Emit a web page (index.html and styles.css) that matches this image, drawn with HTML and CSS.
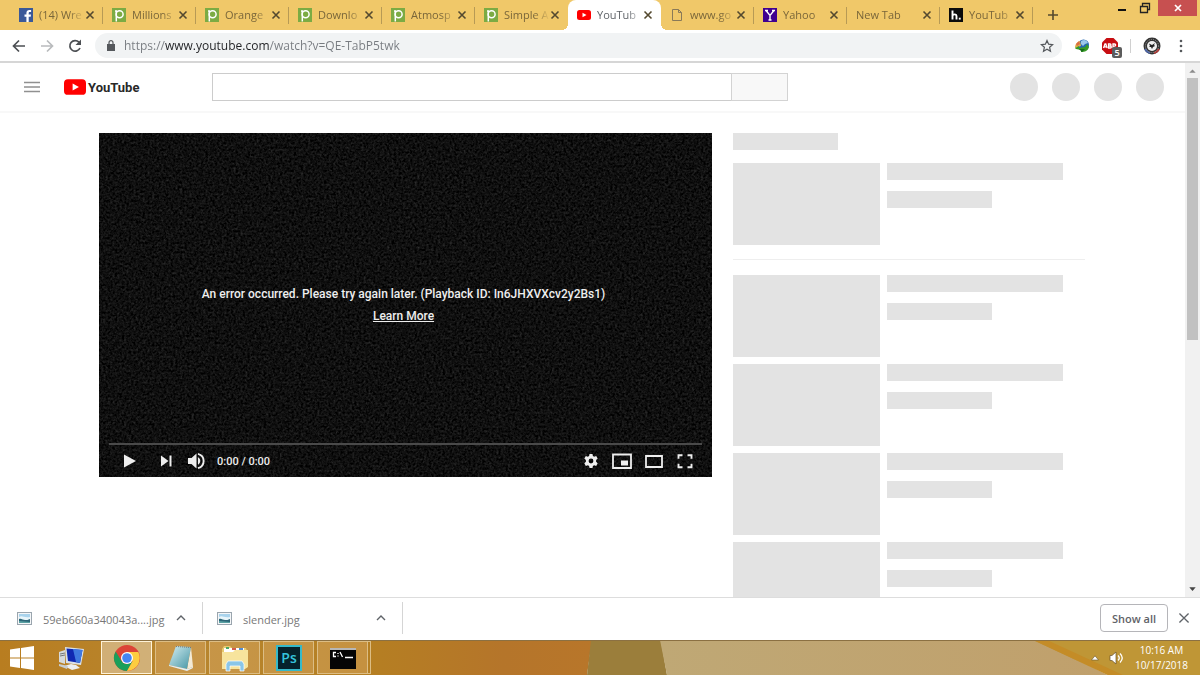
FILE: index.html
```html
<!DOCTYPE html>
<html lang="en">

<head>
    <meta charset="UTF-8">
    <meta name="viewport" content="width=device-width, initial-scale=1.0">
    <title>YouTube</title>
    <link rel="stylesheet" href="styles.css">
</head>

<body>
    <!-- shared icons -->
    <svg class="defs" width="0" height="0" aria-hidden="true">
        <symbol id="i-close" viewBox="0 0 10 10">
            <path d="M1.5 1.5l7 7M8.5 1.5l-7 7" fill="none" stroke="currentColor" stroke-width="1.6" />
        </symbol>
        <symbol id="i-close-thin" viewBox="0 0 10 10">
            <path d="M1.2 1.2l7.600 7.600M8.800 1.2l-7.600 7.600" fill="none" stroke="currentColor" stroke-width="1.1" />
        </symbol>
        <symbol id="i-p" viewBox="0 0 14 14">
            <path d="M0 0h14v14H0z" fill="#7cab43" />
            <path d="M3 3h1.300v10.500" fill="none" stroke="#fff" stroke-width="1.5" />
            <circle cx="7.6" cy="6.2" r="3.5" fill="none" stroke="#fff" stroke-width="1.5" />
        </symbol>
        <symbol id="i-yt" viewBox="0 0 28 20">
            <rect width="28" height="20" rx="5" fill="#f00" />
            <path d="M11 5.5v9l8-4.5z" fill="#fff" />
        </symbol>
        <symbol id="i-up" viewBox="0 0 10 6">
            <path d="M1 5l4-4 4 4" fill="none" stroke="currentColor" stroke-width="1.4" />
        </symbol>
        <symbol id="i-image" viewBox="0 0 15 13">
            <rect x=".5" y=".5" width="14" height="12" fill="#f4f6f8" stroke="#9aa5ae" />
            <path d="M2 2h11v9H2z" fill="#a9d3ec" />
            <path d="M2 5c3-2 5 1 11 0v3H2z" fill="#e9f5fa" />
            <path d="M2 7c2-1 4 1 6 1s3 0 5-1v4H2z" fill="#2c6577" />
            <path d="M2 9l11 1v1H2z" fill="#5aa1a3" />
        </symbol>
    </svg>

    <header class="tab-strip">
        <div class="tabs">
            <div class="tab">
                <svg class="favicon" viewBox="0 0 14 14"><path d="M0 0h14v14H0z" fill="#3b5998" /><path d="M7.4 14V8.8H5.5V6.6h1.9V5c0-2 1.2-3 3-3h1.7v2h-1.2c-.9 0-1.2.4-1.2 1.2v1.4h2.3l-.3 2.2h-2V14z" fill="#fff" /></svg>
                <button class="tab-title">(14) Wre</button>
                <button class="tab-close" aria-label="Close tab"><svg><use href="#i-close" /></svg></button>
            </div>
            <div class="tab">
                <svg class="favicon"><use href="#i-p" /></svg>
                <button class="tab-title">Millions</button>
                <button class="tab-close" aria-label="Close tab"><svg><use href="#i-close" /></svg></button>
            </div>
            <div class="tab">
                <svg class="favicon"><use href="#i-p" /></svg>
                <button class="tab-title">Orange</button>
                <button class="tab-close" aria-label="Close tab"><svg><use href="#i-close" /></svg></button>
            </div>
            <div class="tab">
                <svg class="favicon"><use href="#i-p" /></svg>
                <button class="tab-title">Downlo</button>
                <button class="tab-close" aria-label="Close tab"><svg><use href="#i-close" /></svg></button>
            </div>
            <div class="tab">
                <svg class="favicon"><use href="#i-p" /></svg>
                <button class="tab-title">Atmosp</button>
                <button class="tab-close" aria-label="Close tab"><svg><use href="#i-close" /></svg></button>
            </div>
            <div class="tab before-active">
                <svg class="favicon"><use href="#i-p" /></svg>
                <button class="tab-title">Simple A</button>
                <button class="tab-close" aria-label="Close tab"><svg><use href="#i-close" /></svg></button>
            </div>
            <div class="tab active">
                <svg class="favicon"><use href="#i-yt" /></svg>
                <button class="tab-title">YouTub</button>
                <button class="tab-close" aria-label="Close tab"><svg><use href="#i-close" /></svg></button>
            </div>
            <div class="tab">
                <svg class="favicon" viewBox="0 0 14 14"><path d="M2.5 1.5h6l3 3v8h-9zM8.5 1.5v3h3" fill="none" stroke="#8a7a58" /></svg>
                <button class="tab-title">www.go</button>
                <button class="tab-close" aria-label="Close tab"><svg><use href="#i-close" /></svg></button>
            </div>
            <div class="tab">
                <svg class="favicon" viewBox="0 0 14 14"><path d="M0 0h14v14H0z" fill="#400090" /><path d="M3 2.5l4 5 4-5M7 7v5M2 2.5h3M9 2.5h3M5.5 12h3" fill="none" stroke="#fff" stroke-width="1.4" /></svg>
                <button class="tab-title">Yahoo</button>
                <button class="tab-close" aria-label="Close tab"><svg><use href="#i-close" /></svg></button>
            </div>
            <div class="tab">
                <button class="tab-title">New Tab</button>
                <button class="tab-close" aria-label="Close tab"><svg><use href="#i-close" /></svg></button>
            </div>
            <div class="tab">
                <svg class="favicon" viewBox="0 0 14 14"><path d="M0 0h14v14H0z" fill="#0b0b0b" /><path d="M3.5 2.5v9M3.5 7.5c1-1.6 4-1.6 4 .5v3.5" fill="none" stroke="#fff" stroke-width="1.9" /><path d="M9.8 9.7h1.9v1.9H9.8z" fill="#fff" /></svg>
                <button class="tab-title">YouTub</button>
                <button class="tab-close" aria-label="Close tab"><svg><use href="#i-close" /></svg></button>
            </div>
            <button class="new-tab" aria-label="New tab"><svg viewBox="0 0 12 12"><path d="M6 1v10M1 6h10" stroke="#54492f" stroke-width="1.6" /></svg></button>
        </div>
        <div class="window-buttons">
            <button aria-label="Minimize"><svg viewBox="0 0 12 12"><path d="M2 8h8" stroke="#111" stroke-width="2" /></svg></button>
            <button aria-label="Restore"><svg viewBox="0 0 12 12"><path d="M3.5 4V1.5h7v6H8.500M1.500 4.500h7v6h-7z" fill="none" stroke="#222" stroke-width="1.300" /></svg></button>
            <button class="window-close" aria-label="Close"><svg viewBox="0 0 12 12"><path d="M3 3l6 6M9 3l-6 6" stroke="#fff" stroke-width="1.7" /></svg></button>
        </div>
    </header>

    <div class="toolbar">
        <button aria-label="Back"><svg viewBox="0 0 16 16"><path d="M14 8H3M8 2.500L2.500 8 8 13.500" fill="none" stroke="#4c4f53" stroke-width="1.700" /></svg></button>
        <button aria-label="Forward"><svg viewBox="0 0 16 16"><path d="M2 8h11M8 2.500L13.500 8 8 13.500" fill="none" stroke="#b9bbbd" stroke-width="1.700" /></svg></button>
        <button aria-label="Reload"><svg viewBox="0 0 16 16"><path d="M13 10a5.300 5.300 0 1 1-1-5.800" fill="none" stroke="#4c4f53" stroke-width="1.700" /><path d="M14 1.500V7H8.500z" fill="#4c4f53" /></svg></button>
        <div class="omnibox">
            <svg class="lock" viewBox="0 0 8 11"><path d="M0 4h8v7H0z" fill="#55585c" /><path d="M2 4.500V2.700a2 2 0 0 1 4 0v1.800" fill="none" stroke="#55585c" stroke-width="1.200" /></svg>
            <input class="url" type="text" aria-label="Address" value="https://www.youtube.com/watch?v=QE-TabP5twk">
            <button class="star" aria-label="Bookmark"><svg viewBox="0 0 14 14"><path d="M7 1.500l1.600 3.700 4 .4-3 2.700.9 4L7 10.200l-3.500 2.100.9-4-3-2.700 4-.4z" fill="none" stroke="#55585c" stroke-width="1.200" /></svg></button>
        </div>
        <div class="extensions">
            <button aria-label="Download manager">
                <svg viewBox="0 0 16 16">
                    <circle cx="9.500" cy="7" r="5.500" fill="#2467b0" />
                    <path d="M7 3c3-2 6-1 7 2l-3 1-2 2-2-2z" fill="#9cc8ea" />
                    <path d="M1 10c0-4 2-6 5-7l1 5z" fill="#e0b04a" />
                    <path d="M2 6l3-3 1 3-3 2z" fill="#dc6b45" />
                    <path d="M1 10l4-2v2l6-1 2-3 2 3c-1 4-4 5-8 5v-2l-5-1z" fill="#379a25" />
                    <path d="M5 11l6 0-3 3z" fill="#176b1b" />
                </svg>
            </button>
            <button class="adblock" aria-label="Adblock Plus">
                <svg viewBox="0 0 16 16"><path d="M4.500 0h7L16 4.500v7L11.500 16h-7L0 11.500v-7z" fill="#c70d12" /><path d="M1.500 10L3 6h.8l1.300 4M2.200 8.800h2M6.500 6v4h1.800c1.400 0 1.400-2 0-2H6.700 8.100c1.200 0 1.200-2 0-2zM11 10V6h1.500c1.600 0 1.600 2.200 0 2.200H11" fill="none" stroke="#fff" stroke-width="1.300" /></svg>
                <span class="badge">5</span>
            </button>
            <span class="divider"></span>
            <button class="profile" aria-label="Profile"><svg viewBox="0 0 18 18"><circle cx="9" cy="9" r="8.500" fill="#333" /><path d="M2 12a8 8 0 0 0 5 4" stroke="#4862a8" stroke-width="2" fill="none" /><path d="M11 16a8 8 0 0 0 5-4" stroke="#b33a36" stroke-width="2" fill="none" /><circle cx="9" cy="9" r="6.600" fill="none" stroke="#999" stroke-dasharray="1 1" /><circle cx="9" cy="9" r="5" fill="#f0f0f0" /><path d="M6 6.500l3 1.500 3-2-1 2 1 1-2 1-1 2-1-2-2 0 1-1z" fill="#222" /></svg></button>
            <button class="menu" aria-label="Menu"><svg viewBox="0 0 4 14"><circle cx="2" cy="2" r="1.300" /><circle cx="2" cy="7" r="1.300" /><circle cx="2" cy="12" r="1.300" /></svg></button>
        </div>
    </div>

    <div class="viewport">
        <div class="page">
            <div class="masthead">
                <button class="guide" aria-label="Guide"><svg viewBox="0 0 16 12"><path d="M0 1.500h16M0 6h16M0 10.500h16" stroke="#909090" stroke-width="1.300" /></svg></button>
                <a class="logo" href="#"><svg><use href="#i-yt" /></svg><span>YouTube</span></a>
                <form class="search">
                    <input type="text" aria-label="Search">
                    <button type="button" aria-label="Search"></button>
                </form>
                <div class="avatars">
                    <span></span><span></span><span></span><span></span>
                </div>
            </div>

            <div class="watch">
                <main class="player">
                    <svg class="static" width="100%" height="100%" aria-hidden="true">
                        <filter id="noise" x="0" y="0" width="100%" height="100%" color-interpolation-filters="sRGB">
                            <feTurbulence type="fractalNoise" baseFrequency="0.43" numOctaves="3" seed="4" />
                            <feColorMatrix values="0.2 0.16 0 0 -0.12  0.2 0.16 0 0 -0.12  0.2 0.16 0 0 -0.12  0 0 0 0 1" />
                        </filter>
                        <rect width="100%" height="100%" filter="url(#noise)" />
                    </svg>
                    <div class="error">
                        <p>An error occurred. Please try again later. (Playback ID: In6JHXVXcv2y2Bs1)</p>
                        <a href="#">Learn More</a>
                    </div>
                    <div class="controls">
                        <input class="progress" type="range" value="0" aria-label="Seek">
                        <div class="control-row">
                            <button class="play" aria-label="Play"><svg viewBox="0 0 18 18"><path d="M3 2.500v13L15 9z" /></svg></button>
                            <button aria-label="Next"><svg viewBox="0 0 18 18"><path d="M4 3.500v11L11.500 9zM12.500 3.500h2v11h-2z" /></svg></button>
                            <button aria-label="Mute"><svg viewBox="0 0 18 18"><path d="M1 6v6h3.500l5 4.500v-15L4.500 6zM11 5.300v7.400c3-1.400 3-6 0-7.400z" /><path d="M11 1.800c7.500 2 7.500 12.400 0 14.400" fill="none" stroke="#eee" stroke-width="1.900" /></svg></button>
                            <span class="time">0:00 / 0:00</span>
                            <button class="first-right" aria-label="Settings"><svg viewBox="0 0 18 18"><path fill-rule="evenodd" d="M7.500 2h3l.4 2 1.300.8 2-.7 1.500 2.500-1.600 1.500v1.700l1.600 1.500-1.500 2.600-2-.7-1.300.8-.4 2h-3l-.4-2-1.300-.8-2 .7-1.500-2.600 1.600-1.500V8.100L2.300 6.600l1.500-2.500 2 .7L7.100 4zM9 6.600a2.400 2.400 0 1 0 0 4.800 2.400 2.400 0 0 0 0-4.800z" /></svg></button>
                            <button aria-label="Miniplayer"><svg class="wide" viewBox="0 0 20 18"><path d="M1 2.500h18v13.500H1z" fill="none" stroke="#eee" stroke-width="1.800" /><path d="M9 8.500h7v5H9z" /></svg></button>
                            <button aria-label="Theater mode"><svg class="wide" viewBox="0 0 20 18"><path d="M2 4h16v11H2z" fill="none" stroke="#eee" stroke-width="1.800" /></svg></button>
                            <button aria-label="Full screen"><svg viewBox="0 0 18 18"><path d="M6.500 3.200h-4v3.500M11.500 3.200h4v3.500M6.500 15.200h-4v-3.500M11.500 15.200h4v-3.500" fill="none" stroke="#eee" stroke-width="1.900" /></svg></button>
                        </div>
                    </div>
                </main>

                <aside class="related">
                    <div class="bar short"></div>
                    <div class="video next-up"><div class="thumb"></div><div class="meta"><div class="bar"></div><div class="bar short"></div></div></div>
                    <div class="video"><div class="thumb"></div><div class="meta"><div class="bar"></div><div class="bar short"></div></div></div>
                    <div class="video"><div class="thumb"></div><div class="meta"><div class="bar"></div><div class="bar short"></div></div></div>
                    <div class="video"><div class="thumb"></div><div class="meta"><div class="bar"></div><div class="bar short"></div></div></div>
                    <div class="video"><div class="thumb"></div><div class="meta"><div class="bar"></div><div class="bar short"></div></div></div>
                </aside>
            </div>
        </div>
        <div class="scrollbar">
            <svg viewBox="0 0 14 14"><path d="M4 9l3-3 3 3z" fill="#8b8b8b" /></svg>
            <div class="thumb-bar"></div>
            <svg viewBox="0 0 14 14"><path d="M4 5l3 3.500L10 5z" fill="#444" /></svg>
        </div>
    </div>

    <div class="downloads">
        <div class="download">
            <svg class="file-icon"><use href="#i-image" /></svg>
            <a href="#">59eb660a340043a....jpg</a>
            <button aria-label="File options"><svg><use href="#i-up" /></svg></button>
        </div>
        <div class="download">
            <svg class="file-icon"><use href="#i-image" /></svg>
            <a href="#">slender.jpg</a>
            <button aria-label="File options"><svg><use href="#i-up" /></svg></button>
        </div>
        <button class="show-all">Show all</button>
        <button class="shelf-close" aria-label="Close downloads"><svg><use href="#i-close-thin" /></svg></button>
    </div>

    <footer class="taskbar">
        <svg class="wallpaper" viewBox="0 0 1200 35" preserveAspectRatio="none" aria-hidden="true">
            <defs>
                <linearGradient id="w1"><stop offset="0" stop-color="#b87d20" /><stop offset=".3" stop-color="#b8862f" /><stop offset=".62" stop-color="#b57f22" /><stop offset=".85" stop-color="#b5752a" /><stop offset="1" stop-color="#b8762a" /></linearGradient>
                <linearGradient id="w2"><stop offset="0" stop-color="#bfa875" /><stop offset="1" stop-color="#c0a06c" /></linearGradient>
            </defs>
            <path d="M0 0h592l-5 35H0z" fill="url(#w1)" />
            <path d="M591 0h70l6 35h-80z" fill="#9b7e3b" />
            <path d="M660 0h376l72 35H667z" fill="url(#w2)" />
            <path d="M1033 0h167v35h-92z" fill="#bf9636" />
            <path d="M1033 0h14l76 35h-15z" fill="#c48c27" />
            <path d="M0 .5h1200" stroke="#8b7042" />
        </svg>
        <button class="start" aria-label="Start"><svg viewBox="0 0 24 24"><path d="M0 3.500l10-1.500v9.500H0zM11 1.900L24 0v11.500H11zM0 12.500h10V22L0 20.500zM11 12.500h13V24l-13-1.900z" fill="#fff" /></svg></button>
        <button class="pinned" aria-label="Computer"><svg viewBox="0 0 28 28"><path d="M2 8l6-2v14l-6-2z" fill="#d7dadb" /><path d="M3 10l5-1M3 12l5-1" stroke="#777" /><path d="M8 3l19 2-3 16-15-2z" fill="#d9e1e8" /><path d="M9.500 4.500l16 1.500-2.500 13-12-2z" fill="#1029b2" /><path d="M16 5l9.500 1-2.500 13-4-1z" fill="#3f79df" /><path d="M14 20l5 1 4 3-8 2-8-4z" fill="#eceff1" /><path d="M2 20l9 2-1 3-8-3z" fill="#c9ced2" /></svg></button>
        <div class="tasks">
            <button class="task current" aria-label="Chrome"><svg viewBox="0 0 28 28"><circle cx="14" cy="14" r="13" fill="#dc4437" /><path d="M2.700 7.500A13 13 0 0 0 14 27l5.500-9.800L14 20a6 6 0 0 1-5.500-3z" fill="#1a9f5a" /><path d="M14 27A13 13 0 0 0 25.300 8H14l5.500 9.200z" fill="#fdcd40" /><circle cx="14" cy="14" r="6" fill="#fff" /><circle cx="14" cy="14" r="4.800" fill="#4585f3" /></svg></button>
            <button class="task" aria-label="Notepad"><svg viewBox="0 0 28 28"><defs><linearGradient id="note" x2="1" y2="1"><stop offset="0" stop-color="#d6eef1" /><stop offset="1" stop-color="#4495a5" /></linearGradient></defs><path d="M24 3l2 20-6 2z" fill="#f3ead6" /><path d="M9 2l15 1-4 22L2 21z" fill="url(#note)" /><path d="M2 21l18 4 6-2v1l-6 3L2 22z" fill="#e5edef" /><path d="M9 2.500l15 1" stroke="#777" stroke-dasharray="1 1" /></svg></button>
            <button class="task" aria-label="File Explorer"><svg viewBox="0 0 28 28"><path d="M1 5l2-3h6l2 2h14l1 3v17H1z" fill="#e7ca70" /><path d="M3 4h20v4H3z" fill="#fff" /><path d="M5 3h3v2H5z" fill="#4da764" /><path d="M11 4h4v2h-4z" fill="#d25c4e" /><path d="M18 4h4v2h-4z" fill="#568ed2" /><path d="M1 8h11l2-2h13v17l-3 2H1z" fill="#f7e49d" /><path d="M5 27v-7l2-3h14l2 3v7h-4v-5H9v5z" fill="#8ac6e8" stroke="#fff" stroke-width=".7" /></svg></button>
            <button class="task" aria-label="Photoshop"><svg viewBox="0 0 28 28"><path d="M2 2h24v24H2z" fill="#05222c" stroke="#35b9c9" stroke-width="2" /><text class="ps" x="14" y="19" text-anchor="middle">Ps</text></svg></button>
            <button class="task" aria-label="Command Prompt"><svg viewBox="0 0 28 28"><path d="M1 4h26v21H1z" fill="#050505" /><path d="M1 4h26v2H1z" fill="#b6b6b6" /><path d="M7 8.500H4.500v4H7M9 9v1M9 11.500v1M11 8l2.500 5M16 13.500h8" fill="none" stroke="#fff" stroke-width="1.300" /></svg></button>
            <span class="stack"></span>
        </div>
        <div class="tray">
            <button aria-label="Hidden icons"><svg class="tray-up" viewBox="0 0 8 6"><path d="M.5 5L4 .8 7.500 5z" fill="#fff" stroke="#67512a" stroke-width=".6" /></svg></button>
            <button aria-label="Volume"><svg class="volume" viewBox="0 0 15 14"><path d="M1 4.500h2L7 1v12L3 9.500H1z" fill="#fff" stroke="#67512a" stroke-width=".7" /><path d="M9 4.500c1.500 1.500 1.500 3.500 0 5M11 2.500c3 3 3 6 0 9" fill="none" stroke="#fff" stroke-width="1.300" /></svg></button>
            <div class="clock"><span>10:16 AM</span><span>10/17/2018</span></div>
        </div>
    </footer>
</body>

</html>
```
FILE: styles.css
```css
* {
    box-sizing: border-box;
}

body {
    margin: 0;
    height: 100vh;
    display: flex;
    flex-direction: column;
    overflow: hidden;
    background: #fff;
    font-family: 'Open Sans', 'Noto Sans', sans-serif;
    font-size: 12px;
    color: #5f6368;
}

button {
    display: flex;
    align-items: center;
    justify-content: center;
    padding: 0;
    border: none;
    background: none;
    font-family: inherit;
    color: inherit;
}

svg {
    display: block;
    flex: none;
}

.defs {
    position: absolute;
}

/* tabs */
.tab-strip {
    display: flex;
    justify-content: space-between;
    height: 30px;
    flex: none;
    background: #f0c869;
}

.tabs {
    display: flex;
    flex: 1;
    min-width: 0;
    padding-left: 10px;
}

.tab {
    position: relative;
    display: flex;
    align-items: center;
    flex: 0 1 93px;
    min-width: 0;
    padding: 0 8px 0 9px;
    color: #79663a;
}

.tab::after {
    content: '';
    position: absolute;
    right: 0;
    top: 7px;
    height: 17px;
    border-right: 1px solid #b79a55;
}

.tab.before-active::after,
.tab.active::after {
    display: none;
}

.tab.active {
    background: #fff;
    border-radius: 8px 8px 0 0;
    color: #5f6368;
}

/* flared feet of the active tab */
.tab.active::before {
    content: '';
    position: absolute;
    left: -6px;
    right: -6px;
    bottom: 0;
    height: 6px;
    background:
        radial-gradient(circle at 0 0, transparent 6px, #fff 6px) left / 6px 6px no-repeat,
        radial-gradient(circle at 100% 0, transparent 6px, #fff 6px) right / 6px 6px no-repeat;
}

.favicon {
    width: 14px;
    height: 14px;
    margin-right: 6px;
}

.tab-title {
    flex: 1;
    min-width: 0;
    justify-content: flex-start;
    overflow: hidden;
    white-space: nowrap;
    font-size: 11px;
    line-height: 16px;
    -webkit-mask-image: linear-gradient(90deg, #000 65%, transparent);
    mask-image: linear-gradient(90deg, #000 65%, transparent);
}

.tab-close {
    width: 10px;
    height: 16px;
    color: #54492f;
}

.tab-close svg {
    width: 10px;
    height: 10px;
}

.new-tab {
    width: 40px;
}

.new-tab svg {
    width: 12px;
    height: 12px;
}

.window-buttons {
    display: flex;
    padding-right: 3px;
}

.window-buttons button {
    width: 23px;
    height: 16px;
}

.window-buttons .window-close {
    width: 39px;
    margin-left: 2px;
    background: #c75050;
}

.window-buttons svg {
    width: 12px;
    height: 12px;
}

/* address bar */
.toolbar {
    display: flex;
    align-items: center;
    gap: 12px;
    height: 33px;
    flex: none;
    padding: 0 17px 0 11px;
    border-bottom: 2px solid #d6d6d6;
}

.toolbar svg {
    width: 16px;
    height: 16px;
}

.omnibox {
    display: flex;
    align-items: center;
    flex: 1;
    height: 25px;
    padding: 0 8px 0 12px;
    border-radius: 13px;
    background: #f1f3f4;
}

.omnibox .lock {
    width: 8px;
    height: 11px;
    margin-right: 9px;
}

/* host name darker than the rest */
.url {
    flex: 1;
    min-width: 0;
    height: 20px;
    padding: 0;
    border: none;
    outline: none;
    font-family: inherit;
    font-size: 12px;
    color: transparent;
    background: linear-gradient(90deg, #777b80 41px, #202124 41px, #202124 145px, #777b80 145px);
    -webkit-background-clip: text;
    background-clip: text;
}

.omnibox .star svg {
    width: 14px;
    height: 14px;
}

.extensions {
    display: flex;
    align-items: center;
    gap: 12px;
}

.adblock {
    position: relative;
}

.badge {
    position: absolute;
    right: -4px;
    bottom: -4px;
    width: 10px;
    height: 11px;
    border-radius: 2px;
    background: #5c5c5c;
    color: #fff;
    font-size: 9px;
    line-height: 11px;
    font-weight: 600;
}

.divider {
    height: 14px;
    border-left: 1px solid #d0d0d0;
}

.toolbar .profile svg {
    width: 18px;
    height: 18px;
}

.toolbar .menu {
    margin-left: 6px;
}

.toolbar .menu svg {
    width: 4px;
    height: 14px;
    fill: #55585c;
}

/* page */
.viewport {
    display: flex;
    flex: 1;
    min-height: 0;
}

.page {
    flex: 1;
    min-width: 0;
    overflow: hidden;
}

.masthead {
    display: flex;
    align-items: center;
    height: 50px;
    padding: 0 21px 0 24px;
    border-bottom: 2px solid #f8f8f8;
}

.guide svg {
    width: 16px;
    height: 12px;
}

.logo {
    display: flex;
    align-items: center;
    gap: 2px;
    width: 69px;
    margin-left: 24px;
    color: #282828;
    text-decoration: none;
    font-family: Roboto, sans-serif;
    font-size: 13px;
    font-weight: bold;
}

.logo svg {
    width: 22px;
    height: 16px;
}

.search {
    display: flex;
    flex: 0 1 576px;
    height: 28px;
    margin: 0 20px 0 79px;
}

.search input {
    flex: 1;
    min-width: 0;
    border: 1px solid #ccc;
    border-right: none;
}

.search button {
    width: 57px;
    border: 1px solid #d3d3d3;
    background: #f8f8f8;
}

.avatars {
    display: flex;
    gap: 14px;
    margin-left: auto;
}

.avatars span {
    width: 28px;
    height: 28px;
    border-radius: 50%;
    background: #e3e3e3;
}

.watch {
    display: grid;
    grid-template-columns: minmax(0, 613px) 352px;
    gap: 21px;
    justify-content: center;
    align-items: start;
    padding: 20px 21px 0 20px;
}

.player {
    position: relative;
    display: flex;
    flex-direction: column;
    aspect-ratio: 613 / 344;
    background: #0e0e0e;
    color: #eee;
    font-family: Roboto, sans-serif;
}

.static {
    position: absolute;
    inset: 0;
}

.error {
    position: relative;
    display: flex;
    flex: 1;
    flex-direction: column;
    align-items: center;
    justify-content: center;
    padding: 33px 4px 0 0;
    font-size: 12px;
    font-weight: 500;
    line-height: 22px;
}

.error p {
    margin: 0;
}

.error a {
    color: inherit;
}

.controls {
    position: relative;
    padding: 0 10px;
}

.progress {
    display: block;
    width: 100%;
    height: 2px;
    margin: 0;
    appearance: none;
    background: #4a4a4a;
}

.progress::-webkit-slider-thumb {
    appearance: none;
    width: 0;
    height: 0;
}

.control-row {
    display: flex;
    align-items: center;
    gap: 12px;
    height: 32px;
    padding: 0 8px 0 12px;
}

.control-row svg {
    width: 18px;
    height: 18px;
    fill: #eee;
}

.control-row .wide {
    width: 20px;
}

.play {
    margin-right: 6px;
}

.time {
    font-size: 11px;
    font-weight: 500;
}

.first-right {
    margin-left: auto;
}

.related .bar,
.related .thumb {
    background: #e3e3e3;
}

.related .bar {
    width: 176px;
    height: 17px;
}

.related .bar.short {
    width: 105px;
}

.video {
    display: flex;
    gap: 7px;
    margin-top: 7px;
}

.next-up {
    margin: 13px 0 15px;
    padding-bottom: 14px;
    border-bottom: 1px solid #eee;
}

.thumb {
    width: 147px;
    height: 82px;
}

.meta {
    display: flex;
    flex-direction: column;
    gap: 11px;
}

.scrollbar {
    display: flex;
    flex-direction: column;
    width: 15px;
    background: #f1f1f1;
}

.scrollbar svg {
    width: 15px;
    height: 15px;
}

.thumb-bar {
    width: 11px;
    height: 49%;
    margin: 0 2px auto;
    background: #c1c1c1;
}

/* downloads shelf */
.downloads {
    display: flex;
    align-items: center;
    height: 43px;
    flex: none;
    padding: 0 10px 2px 3px;
    border-top: 1px solid #ddd;
}

.download {
    display: flex;
    align-items: center;
    flex: 0 1 200px;
    height: 32px;
    padding: 0 16px 0 14px;
    border-right: 1px solid #d5d5d5;
}

.download .file-icon {
    width: 15px;
    height: 13px;
    margin-right: 11px;
}

.download a {
    flex: 1;
    padding-top: 4px;
    color: #777;
    text-decoration: none;
    font-size: 11px;
    line-height: 20px;
}

.download button svg {
    width: 10px;
    height: 6px;
}

.show-all {
    width: 68px;
    height: 28px;
    margin: 0 10px 0 auto;
    border: 1px solid #b5b5b9;
    border-radius: 4px;
    font-size: 11px;
    font-weight: 600;
}

.shelf-close svg {
    width: 12px;
    height: 12px;
}

/* taskbar */
.taskbar {
    position: relative;
    display: flex;
    align-items: center;
    height: 35px;
    flex: none;
    padding: 0 12px 0 10px;
}

.wallpaper {
    position: absolute;
    inset: 0;
    width: 100%;
    height: 100%;
}

.taskbar button,
.tasks,
.tray {
    position: relative;
}

.start svg {
    width: 24px;
    height: 24px;
}

.pinned {
    margin-left: 23px;
}

.pinned svg,
.task svg {
    width: 28px;
    height: 28px;
}

.tasks {
    display: flex;
    gap: 3px;
    margin-left: 16px;
}

.task {
    width: 51px;
    height: 33px;
    border: 1px solid #dcbd84;
    background: rgba(225, 180, 120, 0.35);
}

.task.current {
    border-color: #fff3d8;
    background: rgba(225, 205, 170, 0.6);
}

.stack {
    width: 3px;
    height: 33px;
    margin-left: -3px;
    border: 1px solid #dcbd84;
    border-left: none;
}

.ps {
    font-family: 'Open Sans', sans-serif;
    font-size: 14px;
    font-weight: 600;
    fill: #35c4dc;
}

.tray {
    display: flex;
    align-items: center;
    margin-left: auto;
    color: #fff;
}

.tray-up {
    width: 8px;
    height: 6px;
    margin-right: 10px;
}

.volume {
    width: 15px;
    height: 14px;
    margin-right: 11px;
}

.clock {
    display: flex;
    flex-direction: column;
    align-items: center;
    font-size: 10px;
    line-height: 15px;
}
```
